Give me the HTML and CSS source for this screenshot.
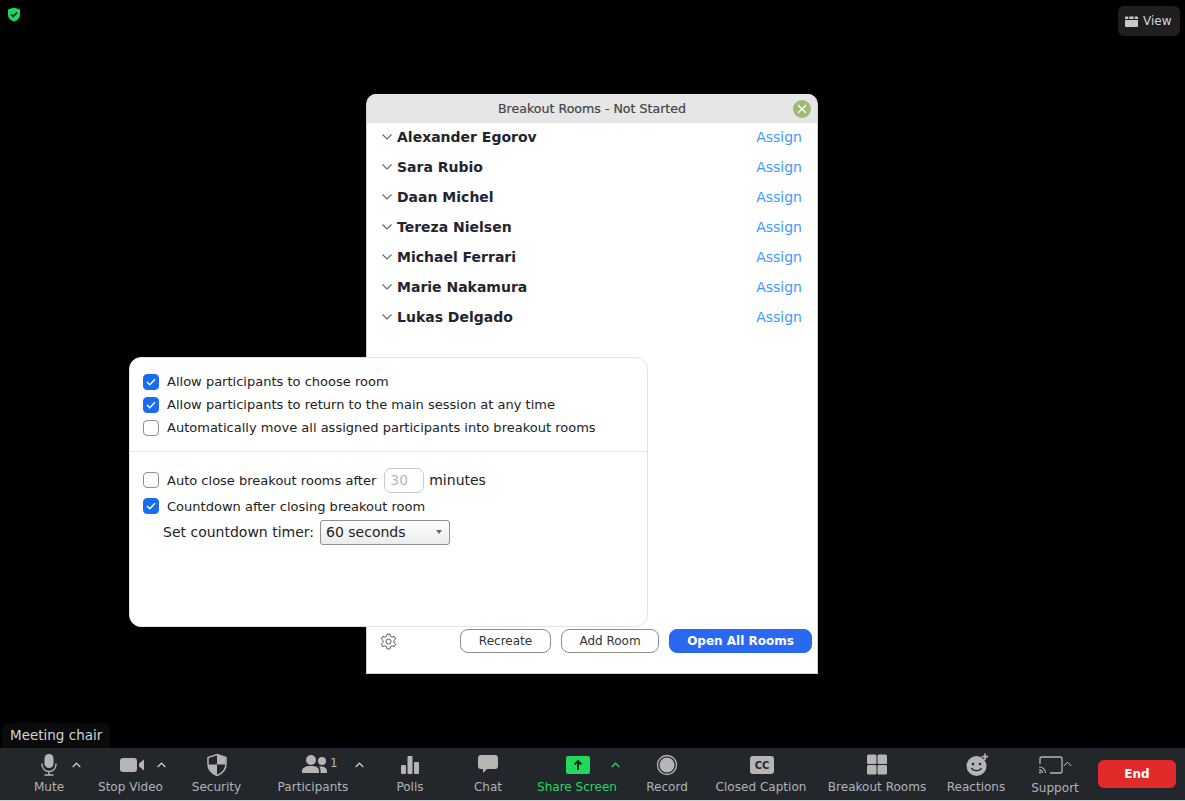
FILE: index.html
```html
<!DOCTYPE html>
<html lang="en">
<head>
<meta charset="utf-8">
<title>Breakout Rooms</title>
<link rel="stylesheet" href="styles.css">
</head>
<body>
<div class="stage">
  <svg class="shield-badge" width="14" height="15" viewBox="0 0 14 15"><path d="M7 .5 13 2.600V7.500C13 11 10.500 13.400 7 14.500 3.500 13.400 1 11 1 7.500V2.600Z" fill="#1ed760"/><path d="M4 7.300 6.200 9.500 10.200 5.300" fill="none" stroke="#06331a" stroke-width="1.800"/></svg>
  <div class="view-btn">
    <svg width="13" height="11" viewBox="0 0 12 11" preserveAspectRatio="none"><path d="M0 1.500A1 1 0 0 1 1 .5H3V3H0ZM4 .5H8V3H4ZM9 .5H11A1 1 0 0 1 12 1.500V3H9ZM0 4H12V10A1 1 0 0 1 11 11H1A1 1 0 0 1 0 10Z" fill="#c9c9c9"/></svg>
    <span>View</span>
  </div>

  <section class="dialog">
    <header class="dialog-head">
      <span class="dialog-title">Breakout Rooms - Not Started</span>
      <span class="dialog-close"><svg width="10" height="10" viewBox="0 0 10 10"><path d="M1 1 9 9M9 1 1 9" stroke="#fff" stroke-width="1.300"/></svg></span>
    </header>
    <ul class="rooms">
      <li class="room"><svg class="caret" width="10" height="6" viewBox="0 0 10 6"><path d="M.5.500 5 5 9.500.500" fill="none" stroke="#666" stroke-width="1.100"/></svg><span class="room-name">Alexander Egorov</span><span class="assign">Assign</span></li>
      <li class="room"><svg class="caret" width="10" height="6" viewBox="0 0 10 6"><path d="M.5.500 5 5 9.500.500" fill="none" stroke="#666" stroke-width="1.100"/></svg><span class="room-name">Sara Rubio</span><span class="assign">Assign</span></li>
      <li class="room"><svg class="caret" width="10" height="6" viewBox="0 0 10 6"><path d="M.5.500 5 5 9.500.500" fill="none" stroke="#666" stroke-width="1.100"/></svg><span class="room-name">Daan Michel</span><span class="assign">Assign</span></li>
      <li class="room"><svg class="caret" width="10" height="6" viewBox="0 0 10 6"><path d="M.5.500 5 5 9.500.500" fill="none" stroke="#666" stroke-width="1.100"/></svg><span class="room-name">Tereza Nielsen</span><span class="assign">Assign</span></li>
      <li class="room"><svg class="caret" width="10" height="6" viewBox="0 0 10 6"><path d="M.5.500 5 5 9.500.500" fill="none" stroke="#666" stroke-width="1.100"/></svg><span class="room-name">Michael Ferrari</span><span class="assign">Assign</span></li>
      <li class="room"><svg class="caret" width="10" height="6" viewBox="0 0 10 6"><path d="M.5.500 5 5 9.500.500" fill="none" stroke="#666" stroke-width="1.100"/></svg><span class="room-name">Marie Nakamura</span><span class="assign">Assign</span></li>
      <li class="room"><svg class="caret" width="10" height="6" viewBox="0 0 10 6"><path d="M.5.500 5 5 9.500.500" fill="none" stroke="#666" stroke-width="1.100"/></svg><span class="room-name">Lukas Delgado</span><span class="assign">Assign</span></li>
    </ul>
    <footer class="dialog-foot">
      <svg class="gear" width="17" height="17" viewBox="0 0 24 24" fill="none" stroke="#555" stroke-width="1.400" stroke-linejoin="round"><circle cx="12" cy="12" r="3.600"/><path d="M10 1.500H14L14.700 4.700 17 5.900 20.100 4.800 22.100 8.300 19.700 10.500V13.500L22.100 15.700 20.100 19.200 17 18.100 14.700 19.300 14 22.500H10L9.300 19.300 7 18.100 3.900 19.200 1.900 15.700 4.300 13.500V10.500L1.900 8.300 3.900 4.800 7 5.900 9.300 4.700Z"/></svg>
      <button class="btn btn-recreate">Recreate</button>
      <button class="btn btn-add">Add Room</button>
      <button class="btn btn-open">Open All Rooms</button>
    </footer>
  </section>

  <section class="options">
    <div class="opt-top">
      <label class="opt"><span class="check on"><svg width="10" height="8" viewBox="0 0 10 8"><path d="M1 4 3.800 6.800 9 1.200" fill="none" stroke="#fff" stroke-width="1.400"/></svg></span>Allow participants to choose room</label>
      <label class="opt"><span class="check on"><svg width="10" height="8" viewBox="0 0 10 8"><path d="M1 4 3.800 6.800 9 1.200" fill="none" stroke="#fff" stroke-width="1.400"/></svg></span>Allow participants to return to the main session at any time</label>
      <label class="opt"><span class="check"></span>Automatically move all assigned participants into breakout rooms</label>
    </div>
    <div class="opt-bottom">
      <label class="opt opt-auto"><span class="check"></span>Auto close breakout rooms after<span class="minutes-input">30</span><span class="minutes">minutes</span></label>
      <label class="opt opt-count"><span class="check on"><svg width="10" height="8" viewBox="0 0 10 8"><path d="M1 4 3.800 6.800 9 1.200" fill="none" stroke="#fff" stroke-width="1.400"/></svg></span>Countdown after closing breakout room</label>
      <div class="timer"><span>Set countdown timer:</span><div class="select"><span>60 seconds</span><i class="select-arrow"></i></div></div>
    </div>
  </section>

  <div class="chair-label">Meeting chair</div>

  <nav class="toolbar">
    <div class="tool t-mute">
      <svg class="ico" width="20" height="24" viewBox="0 0 20 24"><rect x="5.500" y="1" width="9" height="14" rx="4.500" fill="#b5b5b5"/><path d="M3 10.500V11.500A7 7 0 0 0 17 11.500V10.500M10 18.500V21.500M5.500 22H14.500" fill="none" stroke="#b5b5b5" stroke-width="1.400"/></svg>
      <span class="tool-label">Mute</span>
      <svg class="chev chev-mute" width="9" height="6" viewBox="0 0 9 6"><path d="M.7 5 4.500 1.200 8.300 5" fill="none" stroke="#c8c8c8" stroke-width="1.300"/></svg>
    </div>
    <div class="tool t-video">
      <svg class="ico ico-video" width="24" height="24" viewBox="0 0 24 24"><rect x="0" y="5" width="17" height="14" rx="3" fill="#b5b5b5"/><path d="M19 10.500 24 6.500V17.500L19 13.500Z" fill="#b5b5b5"/></svg>
      <span class="tool-label">Stop Video</span>
      <svg class="chev chev-video" width="9" height="6" viewBox="0 0 9 6"><path d="M.7 5 4.500 1.200 8.300 5" fill="none" stroke="#c8c8c8" stroke-width="1.300"/></svg>
    </div>
    <div class="tool t-security">
      <svg class="ico" width="20" height="24" viewBox="0 0 20 24"><path d="M10 1.500 19 4.500V11C19 16.500 15 20.500 10 22.500 5 20.500 1 16.500 1 11V4.500Z" fill="#23262a" stroke="#b5b5b5" stroke-width="1.500"/><path d="M10 2 18.500 4.800V11.500H10ZM10 11.500V22C5.500 20 1.800 16.500 1.500 11.500Z" fill="#b5b5b5"/></svg>
      <span class="tool-label">Security</span>
    </div>
    <div class="tool t-part">
      <svg class="ico ico-part" width="26" height="24" viewBox="0 0 26 24"><circle cx="9" cy="7" r="5" fill="#b5b5b5"/><circle cx="20" cy="8" r="4" fill="#b5b5b5"/><path d="M0 20V18C0 15 3 13 9 13S17 15 17 18V20Z" fill="#b5b5b5"/><path d="M18.500 20V17.500C18.500 15.500 18 14.500 17 13.500 22 13 25 15 25 18V20Z" fill="#b5b5b5"/></svg>
      <span class="part-count">1</span>
      <span class="tool-label">Participants</span>
      <svg class="chev chev-part" width="9" height="6" viewBox="0 0 9 6"><path d="M.7 5 4.500 1.200 8.300 5" fill="none" stroke="#c8c8c8" stroke-width="1.300"/></svg>
    </div>
    <div class="tool t-polls">
      <svg class="ico" width="20" height="24" viewBox="0 0 20 24"><rect x="1" y="12" width="5" height="9" rx="1" fill="#b5b5b5"/><rect x="7.500" y="3" width="5" height="18" rx="1" fill="#b5b5b5"/><rect x="14" y="9" width="5" height="12" rx="1" fill="#b5b5b5"/></svg>
      <span class="tool-label">Polls</span>
    </div>
    <div class="tool t-chat">
      <svg class="ico" width="22" height="24" viewBox="0 0 22 24"><path d="M4 2H18A3 3 0 0 1 21 5V13A3 3 0 0 1 18 16H10L6 20V16H4A3 3 0 0 1 1 13V5A3 3 0 0 1 4 2Z" fill="#b5b5b5"/></svg>
      <span class="tool-label">Chat</span>
    </div>
    <div class="tool t-share">
      <svg class="ico ico-share" width="24" height="24" viewBox="0 0 24 24"><rect x="0" y="3" width="24" height="18" rx="2" fill="#22d95d"/><path d="M12 17V8M8.500 11.500 12 8 15.500 11.500" fill="none" stroke="#0b2f18" stroke-width="2"/></svg>
      <span class="tool-label label-green">Share Screen</span>
      <svg class="chev chev-share" width="9" height="6" viewBox="0 0 9 6"><path d="M.7 5 4.500 1.200 8.300 5" fill="none" stroke="#22d95d" stroke-width="1.300"/></svg>
    </div>
    <div class="tool t-record">
      <svg class="ico" width="22" height="24" viewBox="0 0 22 24"><circle cx="11" cy="12" r="9.500" fill="none" stroke="#b5b5b5" stroke-width="1.300"/><circle cx="11" cy="12" r="7.500" fill="#b5b5b5"/></svg>
      <span class="tool-label">Record</span>
    </div>
    <div class="tool t-cc">
      <span class="cc-badge">CC</span>
      <span class="tool-label">Closed Caption</span>
    </div>
    <div class="tool t-breakout">
      <svg class="ico" width="22" height="24" viewBox="0 0 22 24"><rect x="1" y="1.500" width="9.500" height="9.500" rx="1.500" fill="#b5b5b5"/><rect x="11.500" y="1.500" width="9.500" height="9.500" rx="1.500" fill="#b5b5b5"/><rect x="1" y="12" width="9.500" height="9.500" rx="1.500" fill="#b5b5b5"/><rect x="11.500" y="12" width="9.500" height="9.500" rx="1.500" fill="#b5b5b5"/></svg>
      <span class="tool-label">Breakout Rooms</span>
    </div>
    <div class="tool t-react">
      <svg class="ico ico-react" width="24" height="24" viewBox="0 0 24 24"><circle cx="10.500" cy="13" r="10" fill="#b5b5b5"/><circle cx="7" cy="11" r="1.300" fill="#23262a"/><circle cx="14" cy="11" r="1.300" fill="#23262a"/><path d="M5.500 15C7 18.500 14 18.500 15.500 15" fill="none" stroke="#23262a" stroke-width="1.300"/><path d="M19 .5V7M15.800 3.700H22.200" stroke="#b5b5b5" stroke-width="1.700"/></svg>
      <span class="tool-label">Reactions</span>
    </div>
    <div class="tool t-support">
      <svg class="ico ico-cast" width="24" height="20" viewBox="0 0 24 20"><path d="M1 8V3A2 2 0 0 1 3 1H21A2 2 0 0 1 23 3V15A2 2 0 0 1 21 17H11" fill="none" stroke="#b5b5b5" stroke-width="1.300"/><path d="M0 11A6 6 0 0 1 6.500 17M0 14A3 3 0 0 1 3.500 17" fill="none" stroke="#b5b5b5" stroke-width="1.200"/><circle cx="1" cy="16.500" r="1" fill="#b5b5b5"/></svg>
      <span class="tool-label label-support">Support</span>
      <svg class="chev chev-support" width="9" height="6" viewBox="0 0 9 6"><path d="M.7 5 4.500 1.200 8.300 5" fill="none" stroke="#c8c8c8" stroke-width="1"/></svg>
    </div>
    <div class="end-btn">End</div>
  </nav>
</div>
</body>
</html>
```

FILE: styles.css
```css
* { box-sizing: border-box; }
html, body { margin: 0; padding: 0; height: 100%; background: #000; overflow: hidden; }
body { font-family: "DejaVu Sans", sans-serif; }
.stage { position: relative; width: 1185px; height: 801px; background: #000; display: flex; flex-direction: column; justify-content: flex-end; }

.shield-badge { position: absolute; left: 7px; top: 7px; }

.view-btn { position: absolute; left: 1118px; top: 6px; width: 62px; height: 30px; background: #1f1f1f; border-radius: 6px; display: flex; align-items: center; gap: 5px; padding-left: 7px; color: #d6d6d6; font-size: 12px; }

.dialog { position: absolute; left: 366px; top: 94px; width: 452px; height: 580px; background: #fff; border-radius: 10px 10px 0 0; display: flex; flex-direction: column; border: 1px solid #d0d0d0; border-top: 0; }
.dialog-head { height: 29px; background: #e6e6e6; border-radius: 10px 10px 0 0; display: flex; align-items: center; justify-content: center; position: relative; }
.dialog-title { font-size: 12.6px; font-weight: 500; color: #444; -webkit-text-stroke: .2px #444; }
.dialog-close { position: absolute; right: 6px; top: 6px; width: 18px; height: 18px; border-radius: 50%; background: #9dbb74; display: flex; align-items: center; justify-content: center; }

.rooms { list-style: none; margin: -1px 0 0; padding: 0; flex: 1; }
.room { height: 30px; display: flex; align-items: center; padding: 0 15px 0 15px; }
.caret { margin-right: 5px; flex: none; }
.room-name { font-size: 14px; font-weight: 700; color: #24242e; flex: 1; }
.assign { font-size: 14px; color: #3e9bff; }

.dialog-foot { height: 44px; margin-bottom: 10px; display: flex; align-items: center; padding: 0 5px 0 13px; }
.gear { flex: none; margin-right: 63px; }
.btn { height: 24px; border-radius: 8px; font: 12px "DejaVu Sans", sans-serif; padding: 0; background: #fff; border: 1px solid #8c8c8c; color: #333; }
.btn-recreate { width: 91px; margin-right: 10px; }
.btn-add { width: 98px; margin-right: 10px; }
.btn-open { width: 143px; background: #2b68f0; border-color: #2b68f0; color: #fff; font-weight: 700; }

.options { position: absolute; left: 129px; top: 357px; width: 519px; height: 270px; background: #fff; border: 1px solid #e3e3e3; border-radius: 12px; display: flex; flex-direction: column; }
.opt-top { padding: 12px 13px 0; height: 94px; border-bottom: 1px solid #ececec; }
.opt-bottom { padding: 14px 13px 0; }
.opt { display: flex; align-items: center; height: 23px; font-size: 13.03px; color: #222; }
.check { flex: none; width: 16px; height: 16px; border: 1px solid #8f8f8f; border-radius: 4px; background: #fff; margin-right: 8px; display: flex; align-items: center; justify-content: center; }
.check.on { background: #1a6cf0; border-color: #1a6cf0; }
.opt-auto { height: 28px; }
.opt-count { height: 24px; }
.minutes-input { width: 40px; height: 25px; margin-left: 8px; border: 1px solid #c9c9cf; border-radius: 7px; color: #b9b9b9; padding-left: 5px; font-size: 14px; display: flex; align-items: center; }
.minutes { margin-left: 5px; font-size: 14px; }
.timer { display: flex; align-items: center; gap: 6px; font-size: 14px; color: #222; padding-left: 20px; height: 28px; }
.select { width: 130px; height: 25px; border: 1px solid #909090; border-radius: 3px; background: linear-gradient(#fdfdfd, #ececec); padding: 0 5px; display: flex; align-items: center; justify-content: space-between; font-size: 14px; }
.select-arrow { width: 0; height: 0; border-left: 3.5px solid transparent; border-right: 3.5px solid transparent; border-top: 4px solid #666; margin-right: 2px; }

.chair-label { position: absolute; left: 2px; top: 723px; width: 108px; height: 25px; background: #0a0a0a; border-radius: 6px 6px 0 0; color: #d2d2d2; font-size: 13.5px; display: flex; align-items: center; padding: 0 0 1px 8px; }

.toolbar { height: 53px; display: flex; background: #23262a; border-bottom: 1px solid #d0d0d0; }
.tool { position: relative; flex: none; display: flex; flex-direction: column; align-items: center; padding-top: 5px; }
.ico { flex: none; display: block; }
.tool-label { font-size: 12.05px; color: #aeb4ba; white-space: nowrap; margin-top: 3px; line-height: 15px; }
.label-green { color: #22d95d; }
.label-support { margin-top: 5px; }
.t-mute { width: 98px; }
.t-video { width: 65px; }
.t-security { width: 107px; }
.t-part { width: 86px; }
.t-polls { width: 108px; }
.t-chat { width: 50px; padding-right: 2px; }
.t-share { width: 126px; }
.t-record { width: 54px; }
.t-cc { width: 134px; }
.t-breakout { width: 98px; }
.t-react { width: 100px; }
.t-support { width: 58px; }
.chev { position: absolute; top: 14px; }
.chev-mute { left: 72px; }
.chev-video { left: 59px; }
.chev-share { left: 97px; }
.chev-part { left: 85px; }
.chev-support { left: 37px; top: 13px; }
.ico-video { margin-left: 2px; }
.ico-share { margin-left: 2px; }
.ico-react { margin-left: 3px; }
.ico-part { margin-left: 3px; }
.part-count { position: absolute; left: 60px; top: 8px; font-size: 12px; color: #aeb4ba; }
.ico-cast { margin-top: 3px; margin-left: -8px; }
.cc-badge { width: 24px; height: 18px; margin: 3px 0 3px 2px; border-radius: 3px; background: #b5b5b5; color: #26282c; font-size: 10px; font-weight: 700; display: flex; align-items: center; justify-content: center; }
.end-btn { flex: none; width: 78px; height: 28px; margin: 12px 0 0 14px; border-radius: 6px; background: #e32a2a; color: #fff; font-size: 12px; font-weight: 700; display: flex; align-items: center; justify-content: center; }
```
